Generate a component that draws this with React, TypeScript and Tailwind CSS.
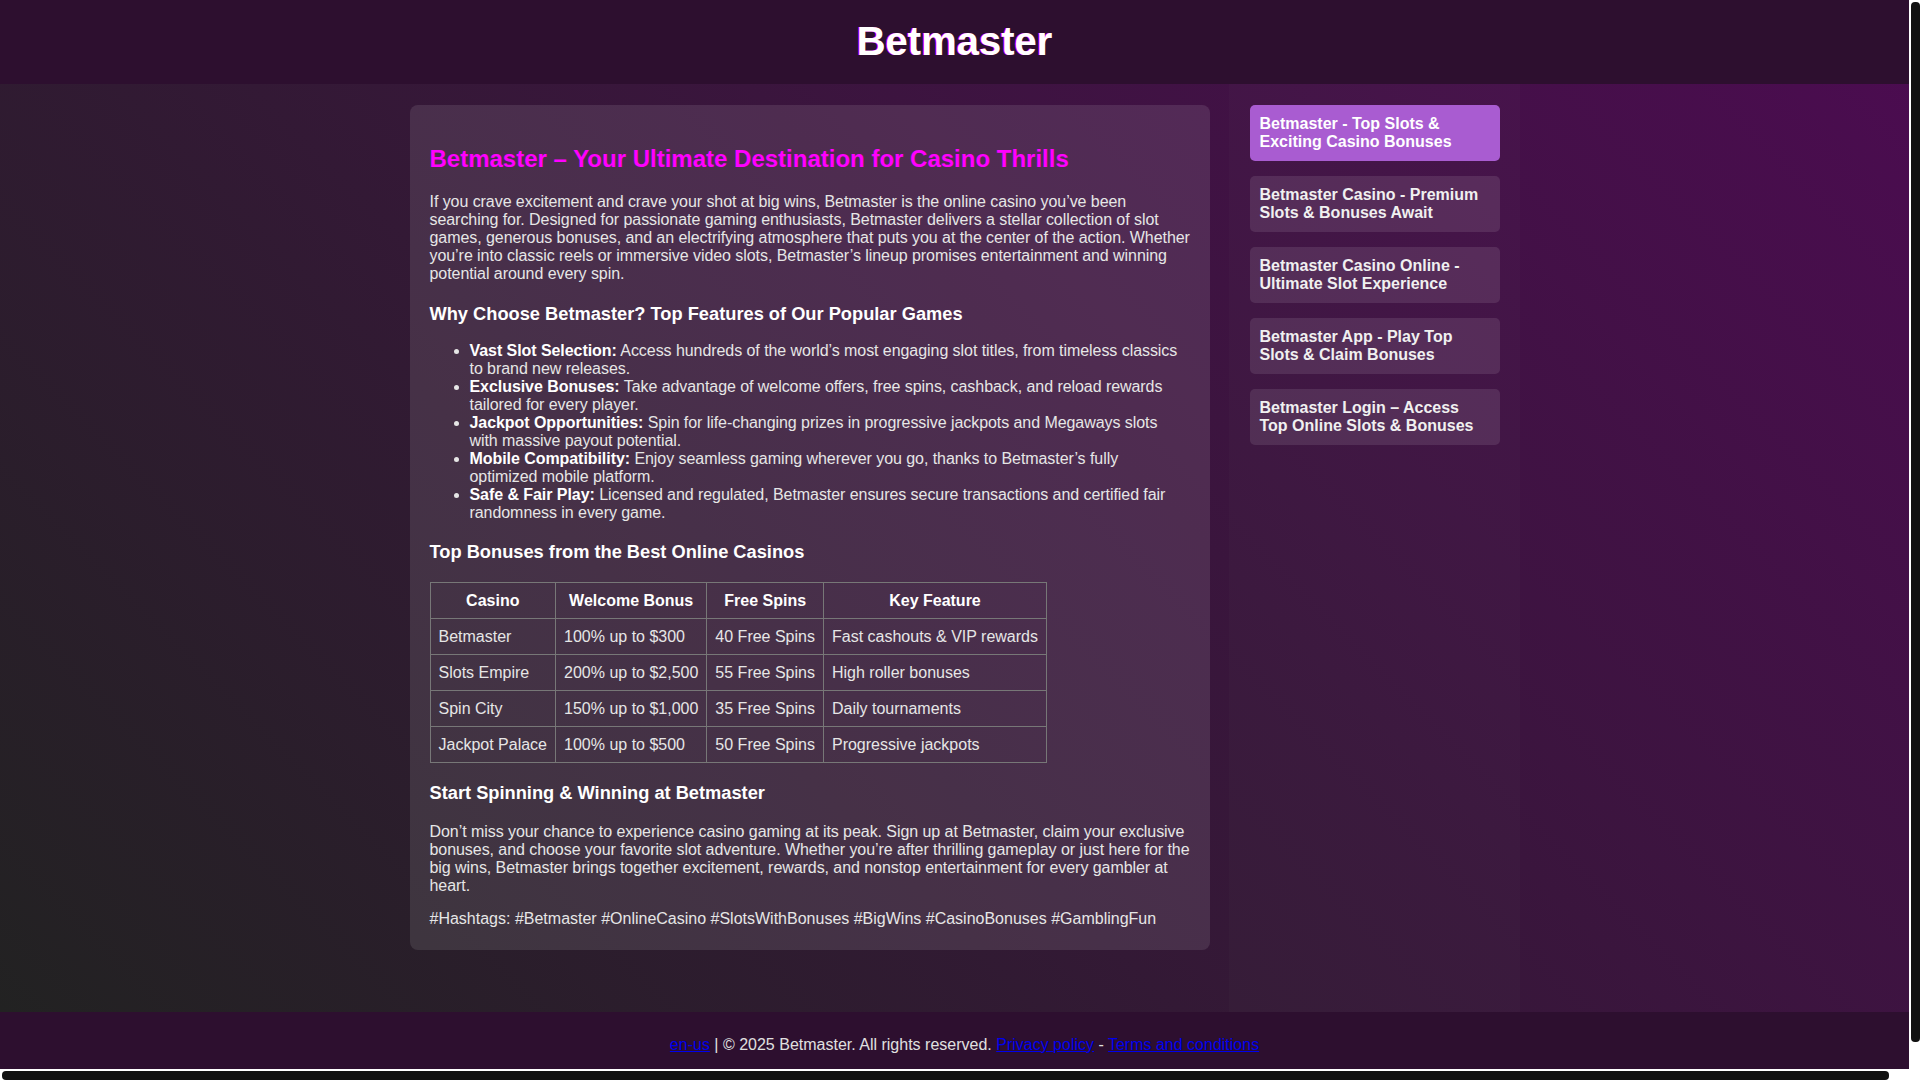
const links = [
  'Betmaster - Top Slots & Exciting Casino Bonuses',
  'Betmaster Casino - Premium Slots & Bonuses Await',
  'Betmaster Casino Online - Ultimate Slot Experience',
  'Betmaster App - Play Top Slots & Claim Bonuses',
  'Betmaster Login – Access Top Online Slots & Bonuses',
];

const features = [
  ['Vast Slot Selection:', ' Access hundreds of the world’s most engaging slot titles, from timeless classics to brand new releases.'],
  ['Exclusive Bonuses:', ' Take advantage of welcome offers, free spins, cashback, and reload rewards tailored for every player.'],
  ['Jackpot Opportunities:', ' Spin for life-changing prizes in progressive jackpots and Megaways slots with massive payout potential.'],
  ['Mobile Compatibility:', ' Enjoy seamless gaming wherever you go, thanks to Betmaster’s fully optimized mobile platform.'],
  ['Safe & Fair Play:', ' Licensed and regulated, Betmaster ensures secure transactions and certified fair randomness in every game.'],
];

const rows = [
  ['Betmaster', '100% up to $300', '40 Free Spins', 'Fast cashouts & VIP rewards'],
  ['Slots Empire', '200% up to $2,500', '55 Free Spins', 'High roller bonuses'],
  ['Spin City', '150% up to $1,000', '35 Free Spins', 'Daily tournaments'],
  ['Jackpot Palace', '100% up to $500', '50 Free Spins', 'Progressive jackpots'],
];

// line breaks as they fall in the original layout
const intro = [
  'If you crave excitement and crave your shot at big wins, Betmaster is the online casino you’ve been',
  'searching for. Designed for passionate gaming enthusiasts, Betmaster delivers a stellar collection of slot',
  'games, generous bonuses, and an electrifying atmosphere that puts you at the center of the action. Whether',
  'you’re into classic reels or immersive video slots, Betmaster’s lineup promises entertainment and winning',
  'potential around every spin.',
];

const outro = [
  'Don’t miss your chance to experience casino gaming at its peak. Sign up at Betmaster, claim your exclusive',
  'bonuses, and choose your favorite slot adventure. Whether you’re after thrilling gameplay or just here for the',
  'big wins, Betmaster brings together excitement, rewards, and nonstop entertainment for every gambler at',
  'heart.',
];

function Lines({ lines }: { lines: string[] }) {
  return (
    <>
      {lines.map((l, i) => (
        <span key={i}>
          {l}
          {i < lines.length - 1 && <br />}
        </span>
      ))}
    </>
  );
}

export default function App() {
  return (
    <div className="h-screen w-screen overflow-hidden grid grid-cols-[1fr_11px] grid-rows-[1fr_11px] font-['Liberation_Sans',Arial,sans-serif] text-[16px] leading-[18px] text-[#e6e6e6]">
      {/* page viewport */}
      <div className="min-w-0 min-h-0 overflow-hidden">
        <header className="w-full bg-[#2d0f2f] pt-[18px] pb-[20px] text-center">
          <h1 className="text-[40px] leading-[46px] font-bold text-white [text-shadow:-1px_0_#ff00ff]">Betmaster</h1>
        </header>

        <div className="w-[calc(100%+20px)] flex justify-center gap-[19px] bg-[linear-gradient(45deg,#222222_0%,#4b0c50_100%)]">
          <div className="pt-[21px] pb-[62px]">
            <main className="w-[800px] rounded-lg bg-white/10 px-5 pt-[40px] pb-[22px] tracking-[-0.06px]">
              <h2 className="text-[24px] leading-[28px] font-bold text-[#ff00ff] mb-[20px] tracking-normal">
                Betmaster – Your Ultimate Destination for Casino Thrills
              </h2>
              <p className="mb-5 -mr-3 whitespace-nowrap">
                <Lines lines={intro} />
              </p>

              <h3 className="text-[18.25px] leading-[21px] font-bold text-white mb-[18px] tracking-normal">
                Why Choose Betmaster? Top Features of Our Popular Games
              </h3>
              <ul className="list-disc pl-10 mb-[19px]">
                {features.map(([label, text]) => (
                  <li key={label}>
                    <strong className="font-bold text-white">{label}</strong>
                    {text}
                  </li>
                ))}
              </ul>

              <h3 className="text-[18.25px] leading-[21px] font-bold text-white mb-[20px] tracking-normal">
                Top Bonuses from the Best Online Casinos
              </h3>
              <table className="border-collapse border border-[#777777] mb-[19px] tracking-normal">
                <thead>
                  <tr>
                    {['Casino', 'Welcome Bonus', 'Free Spins', 'Key Feature'].map((h) => (
                      <th key={h} className="border border-[#777777] px-2 py-2 leading-[19px] font-bold text-white text-center">
                        {h}
                      </th>
                    ))}
                  </tr>
                </thead>
                <tbody>
                  {rows.map((r) => (
                    <tr key={r[0]}>
                      {r.map((c) => (
                        <td key={c} className="border border-[#777777] px-2 py-2 leading-[19px] text-left">
                          {c}
                        </td>
                      ))}
                    </tr>
                  ))}
                </tbody>
              </table>

              <h3 className="text-[18.25px] leading-[21px] font-bold text-white mb-[20px] tracking-normal">
                Start Spinning &amp; Winning at Betmaster
              </h3>
              <p className="mb-[15px] -mr-3 whitespace-nowrap">
                <Lines lines={outro} />
              </p>
              <p className="tracking-normal">#Hashtags: #Betmaster #OnlineCasino #SlotsWithBonuses #BigWins #CasinoBonuses #GamblingFun</p>
            </main>
          </div>

          <aside className="w-[291px] bg-[rgba(128,128,128,0.04)] pl-[21px] pr-5 pt-[21px]">
            {links.map((l, i) => (
              <a
                key={l}
                href="#"
                className={
                  i === 0
                    ? 'block mb-[15px] rounded-[5px] p-[10px] font-bold text-white bg-[#a95cd1]'
                    : 'block mb-[15px] rounded-[5px] p-[10px] font-bold text-[#f0f0f0] bg-white/10'
                }
              >
                {l}
              </a>
            ))}
          </aside>
        </div>

        <footer className="w-[calc(100%+20px)] bg-[#2d0f2f] py-6 text-center text-[#e0e0e0]">
          <a href="#" className="text-[#0000ee] underline">en-us</a> | © 2025 Betmaster. All rights reserved.{' '}
          <a href="#" className="text-[#0000ee] underline">Privacy policy</a> -{' '}
          <a href="#" className="text-[#0000ee] underline">Terms and conditions</a>
        </footer>
      </div>

      {/* vertical scrollbar */}
      <div className="bg-white pl-[2px] pt-[2px]">
        <div className="h-[1040px] w-full rounded-[4px] bg-[#111111]" />
      </div>

      {/* horizontal scrollbar */}
      <div className="bg-white pt-[2px] pl-[2px]">
        <div className="h-full w-[1887px] rounded-[4px] bg-[#111111]" />
      </div>
      <div className="bg-white" />
    </div>
  );
}
